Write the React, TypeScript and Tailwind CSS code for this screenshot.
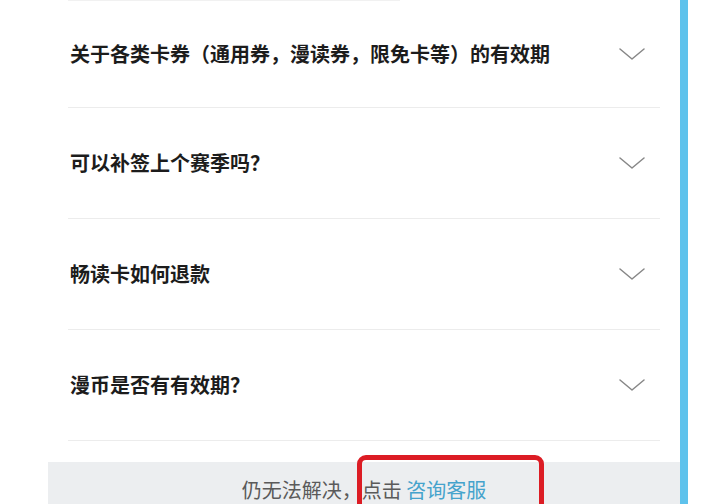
const questions = [
  "关于各类卡券（通用券，漫读券，限免卡等）的有效期",
  "可以补签上个赛季吗？",
  "畅读卡如何退款",
  "漫币是否有有效期？",
]

function Chevron() {
  return (
    <svg width="26" height="12" viewBox="0 0 26 12" fill="none">
      <polyline points="1,1 13,11 25,1" stroke="#878787" strokeWidth="1.5" strokeLinecap="round" strokeLinejoin="round" />
    </svg>
  )
}

export default function App() {
  return (
    <div className="flex h-[504px] w-[720px] overflow-hidden bg-white font-['Noto_Sans_CJK_SC','Noto_Sans',sans-serif]">
      <div className="relative flex w-[680px] flex-col pl-[48px]">
        <div className="mx-[20px] w-[332px] border-t border-[#f1f1f1]" />
        <div className="flex flex-col">
          {questions.map((q, i) => (
            <div
              key={q}
              className={`mx-[20px] flex items-center justify-between border-b border-[#ececec] pl-[2px] pr-[15px] ${i === 0 ? "h-[107px]" : "h-[111px]"}`}
            >
              <span className="text-[20px] font-bold leading-none text-[#1c1c1c]">{q}</span>
              <Chevron />
            </div>
          ))}
        </div>
        <div className="mt-[21px] flex flex-1 justify-center bg-[#eceef0] pt-[17px]">
          <p className="text-[20px] leading-[22px] text-[#5a5a5a]">
            仍无法解决，点击 <span className="text-[#45a3cc]">咨询客服</span>
          </p>
        </div>
        <div className="absolute left-[357px] top-[455px] h-[70px] w-[187px] rounded-[9px] border-[5px] border-[#dc1c24]" />
      </div>
      <div className="w-[8px] bg-[#5ec2ec]" />
      <div className="flex-1 bg-white" />
    </div>
  )
}
